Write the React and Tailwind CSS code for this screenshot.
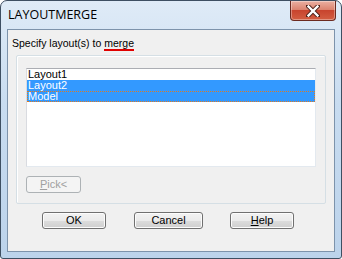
import React from 'react';

const items = [
  { name: 'Layout1', selected: false },
  { name: 'Layout2', selected: true },
  { name: 'Model', selected: true, focus: true },
];

const WinButton = ({ children, width, disabled }) => (
  <div
    className={
      'flex items-center justify-center h-[17px] rounded-[3px] border text-[11px] leading-none ' +
      (disabled
        ? 'border-[#adb2b5] bg-[#f4f4f4] text-[#a0a0a0]'
        : 'border-[#707070] bg-[linear-gradient(#f2f2f2_0%,#ebebeb_50%,#dddddd_51%,#cfcfcf_100%)] text-black shadow-[inset_0_0_0_1px_#fcfcfc]')
    }
    style={{ width }}
  >
    {children}
  </div>
);

const CloseButton = () => (
  <div className="w-[46px] h-[20px] rounded-b-[4px] border border-t-0 border-[#6b2a20] bg-[linear-gradient(#eab0a2_0%,#dc8470_45%,#c8442e_50%,#d35e42_100%)] shadow-[inset_0_0_0_1px_rgba(255,255,255,0.35)] flex items-center justify-center">
    <svg width="14" height="12" viewBox="0 0 14 12">
      <path d="M2 1 L12 11 M12 1 L2 11" stroke="#4a2018" strokeWidth="4.2" strokeLinecap="square" />
      <path d="M2.5 1.5 L11.5 10.5 M11.5 1.5 L2.5 10.5" stroke="#ffffff" strokeWidth="2.4" strokeLinecap="square" />
    </svg>
  </div>
);

export default function App() {
  return (
    <div
      className="w-[342px] h-[259px] bg-white"
      style={{ fontFamily: '"Liberation Sans", Arial, sans-serif' }}
    >
      <div className="w-full h-full flex flex-col rounded-t-[7px] rounded-b-[3px] border border-[#3e4f62] bg-[linear-gradient(180deg,#dfebf7_0%,#c8dcf0_40%,#bcd3eb_100%)] px-[6px] pb-[6px]">
        {/* title bar */}
        <div className="h-[28px] flex items-start justify-between shrink-0">
          <div
            className="pl-[1px] pt-[6px] text-[12.5px] leading-[16px] text-black"
            style={{ fontFamily: '"Open Sans", "Noto Sans", sans-serif' }}
          >
            LAYOUTMERGE
          </div>
          <div className="-mr-[1px]">
            <CloseButton />
          </div>
        </div>

        {/* client area */}
        <div className="flex-1 border border-[#7d93ab] bg-[#f0f0f0] flex flex-col">
          <div className="pl-[4px] pt-[7px] h-[25px] text-[10.5px] leading-[13px] text-black">
            Specify layout(s) to{' '}
            <span className="border-b-2 border-[#e00000]">merge</span>
          </div>

          {/* group box */}
          <div className="ml-[8px] mr-[8px] h-[149px] rounded-[2px] border border-[#d5dfe5] shadow-[inset_1px_1px_0_#ffffff] px-[9px] pt-[12px] flex flex-col">
            <div className="h-[99px] bg-white border border-t-[#abadb3] border-l-[#d9dbe0] border-r-[#e3e9ef] border-b-[#e3e9ef] flex flex-col">
              {items.map((item) => (
                <div
                  key={item.name}
                  className={
                    'h-[11px] pl-[1px] text-[11px] leading-[11px] ' +
                    (item.selected ? 'bg-[#3399ff] text-white ' : 'text-black ') +
                    (item.focus ? 'outline-1 outline-dotted outline-[#e07a20] -outline-offset-1' : '')
                  }
                >
                  {item.name}
                </div>
              ))}
            </div>
            <div className="mt-[9px]">
              <WinButton width={55} disabled>
                <span>
                  <span className="underline">P</span>ick&lt;
                </span>
              </WinButton>
            </div>
          </div>

          {/* buttons */}
          <div className="flex mt-[8px] pl-[34px]">
            <WinButton width={64}>OK</WinButton>
            <div className="ml-[28px]">
              <WinButton width={69}>Cancel</WinButton>
            </div>
            <div className="ml-[27px]">
              <WinButton width={64}>
                <span>
                  <span className="underline">H</span>elp
                </span>
              </WinButton>
            </div>
          </div>
        </div>
      </div>
    </div>
  );
}
